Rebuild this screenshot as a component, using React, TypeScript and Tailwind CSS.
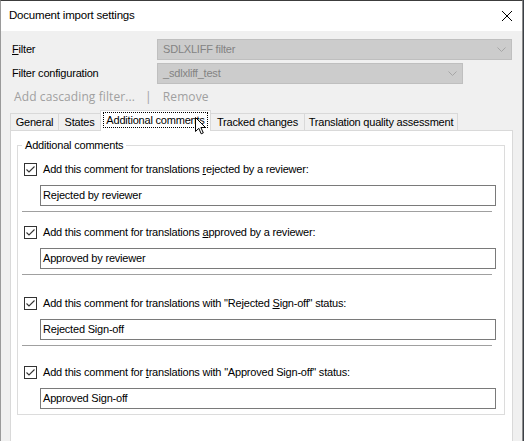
import React from "react";

const font = { fontFamily: '"Liberation Sans", Arial, sans-serif' };

function Chevron() {
  return (
    <svg width="9" height="5" viewBox="0 0 9 5" className="block">
      <path d="M0.5 0.5 L4.5 4.5 L8.5 0.5" fill="none" stroke="#a6a6a6" strokeWidth="1" />
    </svg>
  );
}

function Combo({ text, w }: { text: string; w: string }) {
  return (
    <div className={`${w} h-[21px] bg-[#cccccc] border border-[#bfbfbf] flex items-center justify-between pl-[5px] pr-[5px] text-[#838383]`}>
      <span>{text}</span>
      <Chevron />
    </div>
  );
}

function Check() {
  return (
    <div className="w-[13px] h-[13px] border border-[#333333] bg-white flex items-center justify-center shrink-0">
      <svg width="11" height="11" viewBox="0 0 11 11" className="block">
        <path d="M1.5 5.5 L4 8 L9.5 2.5" fill="none" stroke="#333333" strokeWidth="1.1" />
      </svg>
    </div>
  );
}

function Row({
  label,
  value,
  sep,
  mt,
}: {
  label: React.ReactNode;
  value: string;
  sep: boolean;
  mt: string;
}) {
  return (
    <div className={mt}>
      <div className="flex items-center h-[13px] pl-[6px]">
        <Check />
        <span className="ml-[6px] leading-[13px] whitespace-nowrap">{label}</span>
      </div>
      <div className="ml-[22px] mt-[9px] w-[456px] h-[21px] border border-[#7a7a7a] bg-white flex items-center pl-[2px]">
        {value}
      </div>
      {sep && <div className="ml-[4px] mt-[5px] w-[470px] h-px bg-[#a0a0a0]" />}
    </div>
  );
}

function Cursor() {
  return (
    <svg width="12" height="18" viewBox="0 0 12 18" className="absolute z-20 left-[195px] top-[117px]">
      <path
        d="M0.5 0.5 L0.5 14.5 L3.8 11.3 L6.2 16.8 L8.3 15.9 L5.9 10.5 L10.5 10.5 Z"
        fill="#ffffff"
        stroke="#000000"
        strokeWidth="1"
        strokeLinejoin="miter"
      />
    </svg>
  );
}

export default function App() {
  return (
    <div className="w-[524px] h-[441px] bg-[#3b3f46] overflow-hidden text-[11px] tracking-[-0.2px] text-black relative" style={font}>
      <div className="w-[523px] h-[441px] border-t border-[#3c3c3c] border-r border-r-[#8c8c8c] border-l border-l-[#9a9a9a] bg-[#f0f0f0] flex flex-col">
        {/* Title bar */}
        <div className="h-[30px] bg-white flex items-center justify-between pl-[8px] pr-[9px] shrink-0">
          <span className="text-[11.5px]">Document import settings</span>
          <svg width="12" height="12" viewBox="0 0 12 12" className="block mt-[-1px]">
            <path d="M1 1 L11 11 M11 1 L1 11" stroke="#000" strokeWidth="1" />
          </svg>
        </div>

        {/* Filter rows */}
        <div className="flex items-center mt-[8px] h-[21px]">
          <span className="ml-[11px] w-[145px]">
            <span className="underline">F</span>ilter
          </span>
          <Combo text="SDLXLIFF filter" w="w-[355px]" />
        </div>
        <div className="flex items-center mt-[3px] h-[21px]">
          <span className="ml-[11px] w-[145px]">Filter configuration</span>
          <Combo text="_sdlxliff_test" w="w-[306px]" />
        </div>

        {/* Links */}
        <div
          className="flex items-center mt-[4px] h-[18px] text-[#a0a0a0] ml-[13px] tracking-[0.1px]"
          style={{ fontFamily: '"Open Sans", "Liberation Sans", sans-serif', fontSize: "12px" }}
        >
          <span>Add cascading filter...</span>
          <span className="ml-[10px]">|</span>
          <span className="ml-[11px]">Remove</span>
        </div>

        {/* Tabs */}
        <div className="relative mt-[7px] ml-[9px] h-[17px] flex items-end whitespace-nowrap">
          <div className="w-[49px] h-[17px] border border-b-0 border-[#d9d9d9] bg-[#f0f0f0] flex items-center justify-center">
            General
          </div>
          <div className="w-[42px] h-[17px] border border-l-0 border-b-0 border-[#d9d9d9] bg-[#f0f0f0] flex items-center justify-center">
            States
          </div>
          <div className="relative z-10 w-[111px] h-[21px] mb-[-1px] ml-[-1px] border border-b-0 border-[#d9d9d9] bg-white flex items-start justify-center pt-[1px]">
            <div className="border border-dotted border-black h-[16px] leading-[14px] w-[105px] text-center">
              Additional comments
            </div>
          </div>
          <div className="w-[95px] h-[17px] ml-[-1px] border border-b-0 border-[#d9d9d9] bg-[#f0f0f0] flex items-center justify-center">
            Tracked changes
          </div>
          <div className="w-[153px] h-[17px] border border-l-0 border-b-0 border-[#d9d9d9] bg-[#f0f0f0] flex items-center justify-center">
            Translation quality assessment
          </div>
        </div>

        {/* Panel */}
        <div className="ml-[9px] w-[503px] flex-1 bg-white border border-[#d9d9d9] border-b-0 pt-[14px] pl-[6px]">
          <div className="relative w-[488px] h-[270px] border border-[#dcdcdc]">
            <span className="absolute left-[4px] top-[-9px] bg-white px-[3px] leading-[16px]">Additional comments</span>
            <Row
              mt="mt-[17px]"
              label={
                <>
                  Add this comment for translations <span className="underline">r</span>ejected by a reviewer:
                </>
              }
              value="Rejected by reviewer"
              sep
            />
            <Row
              mt="mt-[14px]"
              label={
                <>
                  Add this comment for translations <span className="underline">a</span>pproved by a reviewer:
                </>
              }
              value="Approved by reviewer"
              sep
            />
            <Row
              mt="mt-[22px]"
              label={
                <>
                  Add this comment for translations with "Rejected <span className="underline">S</span>ign-off" status:
                </>
              }
              value="Rejected Sign-off"
              sep
            />
            <Row
              mt="mt-[20px]"
              label={
                <>
                  Add this comment for <span className="underline">t</span>ranslations with "Approved Sign-off" status:
                </>
              }
              value="Approved Sign-off"
              sep={false}
            />
          </div>
        </div>
      </div>
      <Cursor />
    </div>
  );
}
